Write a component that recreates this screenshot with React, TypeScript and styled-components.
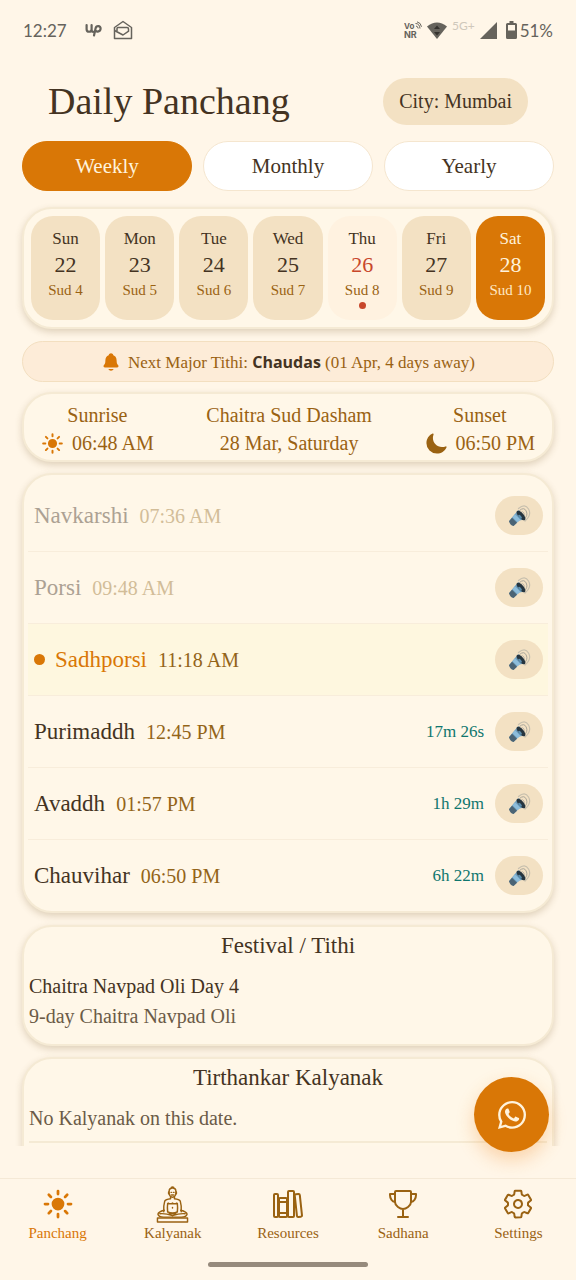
import React from "react";
import styled, { createGlobalStyle } from "styled-components";
import {
  IoLibraryOutline,
  IoLogoWhatsapp,
  IoMoon,
  IoNotifications,
  IoSettingsOutline,
  IoSunny,
  IoTrophyOutline,
} from "react-icons/io5";

const c = {
  page: "#fff6e8",
  orange: "#d97706",
  brown: "#9a6212",
  ink: "#443322",
  sand: "#f3e1c3",
  line: "#f8eddb",
  cardLine: "#f5ead4",
  grey: "#66635c",
};

const serif = `"Liberation Serif", "Times New Roman", serif`;
const sans = `"Open Sans", "Noto Sans", sans-serif`;

const Global = createGlobalStyle`
  *, *::before, *::after { box-sizing: border-box; }
  body { margin: 0; background: ${c.page}; color: ${c.ink}; font-family: ${serif}; }
  button { font: inherit; color: inherit; border: 0; margin: 0; padding: 0; cursor: pointer; }
  h1, h2, p, ul { margin: 0; padding: 0; font-weight: 400; }
  ul { list-style: none; }
`;

const Shell = styled.div`
  display: flex;
  flex-direction: column;
  height: 100vh;
  position: relative;
`;

const StatusBar = styled.div`
  display: flex;
  justify-content: space-between;
  align-items: center;
  height: 60px;
  padding: 0 23px;
  color: ${c.grey};
  font-family: Lato, ${sans};
  font-size: 17px;
  flex: none;
`;

const StatusGroup = styled.div<{ $gap: number }>`
  display: flex;
  align-items: center;
  gap: ${(p) => p.$gap}px;
`;

const NetworkLabel = styled.span`
  font-size: 12px;
  line-height: 12px;
  color: #cfc8bb;
  align-self: flex-start;
`;

const BatteryGroup = styled.span`
  display: flex;
  align-items: center;
  gap: 3px;
  margin-left: 4px;
`;

const Header = styled.header`
  display: flex;
  justify-content: space-between;
  align-items: center;
  padding: 18px 48px 16px;
  flex: none;
`;

const Title = styled.h1`
  font-size: 38px;
  line-height: 47px;
`;

const CityButton = styled.button`
  height: 47px;
  padding: 0 16px;
  border-radius: 24px;
  background: ${c.sand};
  font-size: 20px;
`;

const Main = styled.main`
  flex: 1;
  min-height: 0;
  overflow: hidden;
  padding: 0 22px;
  margin-bottom: 32px;
`;

const Tabs = styled.div`
  display: grid;
  grid-template-columns: repeat(3, 1fr);
  gap: 11px;
  margin-bottom: 16px;
`;

const Tab = styled.button<{ $active?: boolean }>`
  height: 50px;
  border-radius: 25px;
  font-size: 21px;
  border: 1px solid ${(p) => (p.$active ? c.orange : "#f5e6cf")};
  background: ${(p) => (p.$active ? c.orange : "#ffffff")};
  color: ${(p) => (p.$active ? "#fff3dc" : c.ink)};
`;

const Card = styled.section`
  border: 2px solid ${c.cardLine};
  border-radius: 30px;
  background: #fff7e8;
  box-shadow: 0 3px 7px rgba(120, 90, 40, 0.24);
  margin-bottom: 12px;
`;

const Week = styled(Card)`
  display: grid;
  grid-template-columns: repeat(7, 1fr);
  gap: 5px;
  padding: 7px;
`;

type DayKind = "plain" | "special" | "selected";

const DayCell = styled.button<{ $kind: DayKind }>`
  display: flex;
  flex-direction: column;
  align-items: center;
  height: 104px;
  padding-top: 10px;
  border-radius: 22px;
  background: ${(p) =>
    p.$kind === "selected" ? c.orange : p.$kind === "special" ? "#fff2e0" : c.sand};
  color: ${(p) => (p.$kind === "selected" ? "#fff3dc" : c.ink)};
`;

const DayName = styled.span`
  font-size: 17px;
  line-height: 26px;
`;

const DayNumber = styled.span<{ $kind: DayKind }>`
  font-size: 22px;
  line-height: 26px;
  color: ${(p) => (p.$kind === "special" ? "#c8472b" : "inherit")};
`;

const DayTithi = styled.span<{ $kind: DayKind }>`
  font-size: 15px;
  line-height: 24px;
  color: ${(p) => (p.$kind === "selected" ? "#ffe9c4" : c.brown)};
`;

const DayDot = styled.span`
  width: 7px;
  height: 7px;
  border-radius: 50%;
  background: #c8472b;
`;

const Notice = styled.p`
  display: flex;
  align-items: center;
  justify-content: center;
  gap: 7px;
  height: 41px;
  margin-bottom: 10px;
  border: 1px solid #f3dfc0;
  border-radius: 21px;
  background: #fdecd8;
  color: ${c.brown};
  font-size: 17px;

  svg {
    color: ${c.orange};
  }
`;

const TithiName = styled.strong`
  font-family: ${sans};
  font-size: 16px;
  font-weight: 700;
  color: ${c.ink};
`;

const SunCard = styled(Card)`
  display: flex;
  justify-content: space-between;
  height: 70px;
  padding: 7px 17px 0;
  margin-bottom: 11px;
  color: ${c.brown};
  text-align: center;
`;

const SunColumn = styled.div`
  font-size: 20px;
  line-height: 28px;
`;

const TimeLine = styled.div<{ $tint: string }>`
  display: flex;
  align-items: center;
  gap: 8px;

  svg {
    color: ${(p) => p.$tint};
  }
`;

const TimingCard = styled(Card)`
  padding: 5px 4px 0;
`;

const TimingRow = styled.li<{ $active?: boolean }>`
  display: flex;
  align-items: center;
  padding: 16px 5px 16px 6px;
  background: ${(p) => (p.$active ? "#fef7df" : "transparent")};

  &:not(:last-child) {
    border-bottom: 1px solid ${c.line};
  }
`;

const ActiveDot = styled.span`
  width: 11px;
  height: 11px;
  border-radius: 50%;
  margin-right: 10px;
  background: ${c.orange};
`;

const TimingName = styled.span<{ $state: TimingState }>`
  font-size: 23px;
  line-height: 28px;
  margin-right: 11px;
  color: ${(p) =>
    p.$state === "past" ? "#aca193" : p.$state === "active" ? c.orange : c.ink};
`;

const TimingTime = styled.span<{ $state: TimingState }>`
  flex: 1;
  font-size: 20px;
  line-height: 28px;
  color: ${(p) => (p.$state === "past" ? "#d2bd98" : "#936418")};
`;

const Remaining = styled.span`
  font-size: 17px;
  color: #0f766e;
  margin-right: 11px;
`;

const SoundButton = styled.button`
  display: grid;
  place-items: center;
  width: 48px;
  height: 39px;
  border-radius: 20px;
  background: ${c.sand};
`;

const InfoCard = styled(Card)`
  padding: 4px 5px 13px;
  margin-bottom: 11px;
`;

const InfoTitle = styled.h2`
  font-size: 23px;
  line-height: 30px;
  text-align: center;
  margin-bottom: 10px;
`;

const InfoText = styled.p<{ $strong?: boolean }>`
  font-size: 20px;
  line-height: 30px;
  color: ${(p) => (p.$strong ? c.ink : "#6b5b47")};
`;

const InfoDivider = styled.hr`
  margin: 8px 0 120px;
  border: 0;
  border-top: 2px solid ${c.cardLine};
`;

const ChatButton = styled.button`
  position: absolute;
  right: 27px;
  bottom: 128px;
  display: grid;
  place-items: center;
  width: 75px;
  height: 75px;
  border-radius: 50%;
  background: ${c.orange};
  color: #fff3dc;
  box-shadow: 0 8px 18px rgba(240, 140, 40, 0.32);
`;

const BottomNav = styled.nav`
  display: grid;
  grid-template-columns: repeat(5, 1fr);
  height: 84px;
  padding-top: 9px;
  border-top: 1px solid #f5e9d6;
  flex: none;
`;

const NavLink = styled.a<{ $active?: boolean }>`
  display: flex;
  flex-direction: column;
  align-items: center;
  gap: 3px;
  color: ${(p) => (p.$active ? c.orange : c.brown)};
  font-size: 15px;
  line-height: 20px;
  text-decoration: none;
`;

const HomeIndicator = styled.div`
  align-self: center;
  width: 160px;
  height: 5px;
  margin-bottom: 13px;
  border-radius: 3px;
  background: #968a7c;
  flex: none;
`;

const UpLogo = () => (
  <svg width="17" height="14" viewBox="0 0 17 14" fill="none" stroke="currentColor" strokeWidth="2.2" strokeLinecap="round">
    <path d="M1.6 2v4.2c0 3.4 5 3.4 5 0V2M6.6 6.4c0 1.6.8 2.4 1.8 2.4" />
    <path d="M9 12.4 10.6 5.2C11.2 2.2 15.8 2.4 15.6 5.6 15.4 8.8 11.600 9.200 10.600 7.600" />
  </svg>
);

const MailIcon = () => (
  <svg width="20" height="20" viewBox="0 0 20 20" fill="none" stroke="currentColor" strokeWidth="1.5" strokeLinejoin="round">
    <path d="M1.500 18.500V7.500L10 1.500l8.500 6v11z" />
    <path d="M1.500 10.500 10 15l6-4.200M4 11V8.500Q4 7.500 5 7.500h9q1.500 0 1.500 1.500v2" />
  </svg>
);

const VoiceIcon = () => (
  <svg width="18" height="18" viewBox="0 0 18 18" fontFamily="Inter, sans-serif" fontWeight="700" fill="currentColor">
    <text x="0" y="7.500" fontSize="8">Vo</text>
    <text x="0" y="17" fontSize="9">NR</text>
    <path d="M11.500 2.500q4 0 4.500 5M12 5q2 .3 2.200 2.500M13 .8q4 1 4.500 5" fill="none" stroke="currentColor" strokeWidth="1" />
  </svg>
);

const WifiIcon = () => (
  <svg width="20" height="17" viewBox="0 0 20 17">
    <path d="M0 4.500Q10-3.500 20 4.500L10 17z" fill="currentColor" />
    <path d="M10 3.500 13 7H7zM10 13.500 7 10h6z" fill="#35322e" />
  </svg>
);

const SignalIcon = () => (
  <svg width="17" height="17" viewBox="0 0 17 17">
    <path d="M17 0v17H0z" fill="currentColor" />
  </svg>
);

const BatteryIcon = () => (
  <svg width="11" height="18" viewBox="0 0 11 18">
    <path d="M3.500 0h4v2h2Q11 2 11 3.500v13Q11 18 9.500 18h-8Q0 18 0 16.500v-13Q0 2 1.500 2h2z" fill="currentColor" />
    <path d="M2 4h7v5.500H2z" fill={c.page} />
  </svg>
);

const SpeakerIcon = () => (
  <svg width="24" height="24" viewBox="0 0 24 24" aria-hidden="true">
    <g fill="none" strokeLinecap="round">
      <path d="M11.500 4.500Q18-1 21.500 5t-3.500 12" stroke="#c8c0ae" strokeWidth="1.200" />
      <path d="M12.500 6.500Q17 2.500 19.200 7t-2 8" stroke="#aaa69a" strokeWidth="1" />
      <path d="M13.500 8.500q2.500-2 3.500.5t-1 4" stroke="#bdb6a8" strokeWidth="1" />
    </g>
    <path d="M2 17.200 7.500 10.500l4-4.500 6.500 9.500-5.800 1-5.700 5.500z" fill="#6f9dbb" />
    <path d="M2 17.200 5 13.800l5 5L6.500 22q-3.500-.6-4.500-4.800z" fill="#4b6475" />
    <path d="m5.500 13.200 2.500-3 5.500 5.600-3 2.400z" fill="#8dbddb" />
    <ellipse cx="14" cy="11.500" rx="2.600" ry="6" transform="rotate(-42 14 11.500)" fill="#26353f" />
    <ellipse cx="13" cy="12.800" rx="1.300" ry="2.400" transform="rotate(-42 13 12.800)" fill="#5b8dad" />
  </svg>
);

const MeditationIcon = () => (
  <svg width="33" height="37" viewBox="0 0 34 38" fill="none" stroke="currentColor" strokeWidth="1.500" strokeLinecap="round" strokeLinejoin="round">
    <path d="M13.500 5.500q0-3.500 3.500-3.500t3.500 3.500v2q-.5 3.500-3.500 4-3-.5-3.500-4zM15.500 2.500q0-1.500 1.500-1.500t1.500 1.500" />
    <path d="M13 6v2M21 6v2M15.500 6.500h.6M18 6.500h.6M16 9.200h2" />
    <path d="M15 11v2q-5 .6-6 2.500-1.500 5-1 11M19 11v2q5 .6 6 2.500 1.500 5 1 11" />
    <path d="M12 18q-.5 4 0 8.500M22 18q.5 4 0 8.500M12.500 17.500q2.500 1.500 4.500 0 2 1.500 4.500 0M17 22v.5" />
    <path d="M8.500 25q-6 1.500-6.500 4 .5 3 6 3h18q5.500 0 6-3-.5-2.500-6.500-4M4 28.500q6-.5 13 2 7-2.500 13-2M12 26.500q5 2.500 10 0M13.500 28.500h7" />
    <path d="M1.500 33h31v4h-31z" />
  </svg>
);

const days: { name: string; date: number; tithi: number; kind: DayKind }[] = [
  { name: "Sun", date: 22, tithi: 4, kind: "plain" },
  { name: "Mon", date: 23, tithi: 5, kind: "plain" },
  { name: "Tue", date: 24, tithi: 6, kind: "plain" },
  { name: "Wed", date: 25, tithi: 7, kind: "plain" },
  { name: "Thu", date: 26, tithi: 8, kind: "special" },
  { name: "Fri", date: 27, tithi: 9, kind: "plain" },
  { name: "Sat", date: 28, tithi: 10, kind: "selected" },
];

type TimingState = "past" | "active" | "upcoming";

const timings: { name: string; time: string; state: TimingState; left?: string }[] = [
  { name: "Navkarshi", time: "07:36 AM", state: "past" },
  { name: "Porsi", time: "09:48 AM", state: "past" },
  { name: "Sadhporsi", time: "11:18 AM", state: "active" },
  { name: "Purimaddh", time: "12:45 PM", state: "upcoming", left: "17m 26s" },
  { name: "Avaddh", time: "01:57 PM", state: "upcoming", left: "1h 29m" },
  { name: "Chauvihar", time: "06:50 PM", state: "upcoming", left: "6h 22m" },
];

const navItems = [
  { label: "Panchang", icon: <IoSunny size={32} />, active: true },
  { label: "Kalyanak", icon: <MeditationIcon /> },
  { label: "Resources", icon: <IoLibraryOutline size={32} /> },
  { label: "Sadhana", icon: <IoTrophyOutline size={32} /> },
  { label: "Settings", icon: <IoSettingsOutline size={32} /> },
];

const NavIcon = styled.span`
  display: flex;
  align-items: center;
  justify-content: center;
  height: 32px;
`;

export default function App() {
  return (
    <Shell>
      <Global />
      <StatusBar>
        <StatusGroup $gap={18}>
          <span>12:27</span>
          <StatusGroup $gap={11}>
            <UpLogo />
            <MailIcon />
          </StatusGroup>
        </StatusGroup>
        <StatusGroup $gap={5}>
          <VoiceIcon />
          <WifiIcon />
          <NetworkLabel>5G+</NetworkLabel>
          <SignalIcon />
          <BatteryGroup>
            <BatteryIcon />
            51%
          </BatteryGroup>
        </StatusGroup>
      </StatusBar>

      <Header>
        <Title>Daily Panchang</Title>
        <CityButton type="button">City: Mumbai</CityButton>
      </Header>

      <Main>
        <Tabs>
          <Tab type="button" $active>Weekly</Tab>
          <Tab type="button">Monthly</Tab>
          <Tab type="button">Yearly</Tab>
        </Tabs>

        <Week>
          {days.map((d) => (
            <DayCell type="button" key={d.name} $kind={d.kind}>
              <DayName>{d.name}</DayName>
              <DayNumber $kind={d.kind}>{d.date}</DayNumber>
              <DayTithi $kind={d.kind}>Sud {d.tithi}</DayTithi>
              {d.kind === "special" && <DayDot />}
            </DayCell>
          ))}
        </Week>

        <Notice>
          <IoNotifications size={20} />
          <span>
            Next Major Tithi: <TithiName>Chaudas</TithiName> (01 Apr, 4 days away)
          </span>
        </Notice>

        <SunCard>
          <SunColumn>
            <div>Sunrise</div>
            <TimeLine $tint={c.orange}>
              <IoSunny size={23} />
              06:48 AM
            </TimeLine>
          </SunColumn>
          <SunColumn>
            <div>Chaitra Sud Dasham</div>
            <div>28 Mar, Saturday</div>
          </SunColumn>
          <SunColumn>
            <div>Sunset</div>
            <TimeLine $tint={c.brown}>
              <IoMoon size={23} />
              06:50 PM
            </TimeLine>
          </SunColumn>
        </SunCard>

        <TimingCard>
          <ul>
            {timings.map((t) => (
              <TimingRow key={t.name} $active={t.state === "active"}>
                {t.state === "active" && <ActiveDot />}
                <TimingName $state={t.state}>{t.name}</TimingName>
                <TimingTime $state={t.state}>{t.time}</TimingTime>
                {t.left && <Remaining>{t.left}</Remaining>}
                <SoundButton type="button" aria-label={`Play ${t.name}`}>
                  <SpeakerIcon />
                </SoundButton>
              </TimingRow>
            ))}
          </ul>
        </TimingCard>

        <InfoCard>
          <InfoTitle>Festival / Tithi</InfoTitle>
          <InfoText $strong>Chaitra Navpad Oli Day 4</InfoText>
          <InfoText>9-day Chaitra Navpad Oli</InfoText>
        </InfoCard>

        <InfoCard>
          <InfoTitle>Tirthankar Kalyanak</InfoTitle>
          <InfoText>No Kalyanak on this date.</InfoText>
          <InfoDivider />
        </InfoCard>
      </Main>

      <ChatButton type="button" aria-label="Chat on WhatsApp">
        <IoLogoWhatsapp size={32} />
      </ChatButton>

      <BottomNav>
        {navItems.map((n) => (
          <NavLink href="#" key={n.label} $active={n.active}>
            <NavIcon>{n.icon}</NavIcon>
            {n.label}
          </NavLink>
        ))}
      </BottomNav>
      <HomeIndicator />
    </Shell>
  );
}
